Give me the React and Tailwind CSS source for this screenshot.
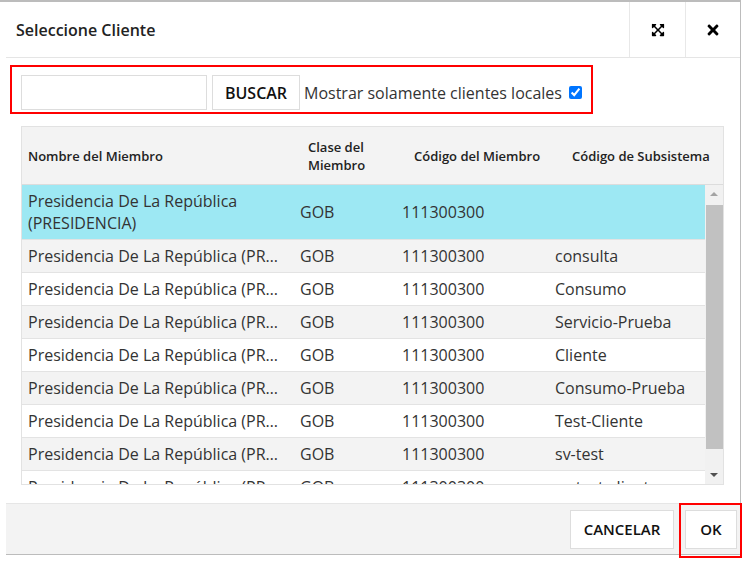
import { FaExpandArrowsAlt, FaTimes } from 'react-icons/fa';

const subs = ['consulta', 'Consumo', 'Servicio-Prueba', 'Cliente', 'Consumo-Prueba', 'Test-Cliente', 'sv-test', 'sv-test-client'];

const cols = 'grid grid-cols-[272px_102px_153px_1fr]';

export default function App() {
  return (
    <div className="w-[750px] h-[564px] bg-white font-['Open_Sans',sans-serif] text-[#333]">
      <div className="relative w-[741px] h-[555px] border-t-2 border-r border-[#bcbcbc] pl-[6px] flex flex-col">
        {/* Header */}
        <header className="h-[56px] shrink-0 border-b border-[#e5e5e5] flex items-center justify-between">
          <h1 className="pl-[10px] text-[16px] font-semibold text-[#222]">Seleccione Cliente</h1>
          <div className="flex h-full">
            <button className="w-[56px] h-full border-l border-[#e8e8e8] flex items-center justify-center text-black">
              <FaExpandArrowsAlt className="w-[14px] h-[14px]" />
            </button>
            <button className="w-[55px] h-full border-l border-[#e8e8e8] flex items-center justify-center text-black">
              <FaTimes className="w-[16px] h-[16px]" />
            </button>
          </div>
        </header>

        {/* Body */}
        <main className="flex-1 flex flex-col items-start">
          <div className="ml-[4px] mt-[7px] border-2 border-[#ff0000] flex items-center pl-[9px] pr-[9px] pt-[8px] pb-[2px]">
            <input className="w-[186px] h-[35px] border border-[#dddddd] bg-white" />
            <button className="ml-[5px] w-[88px] h-[35px] border border-[#dddddd] bg-white text-[16px] font-semibold text-[#111]">
              BUSCAR
            </button>
            <span className="ml-[4px] text-[16px] text-[#333]">Mostrar solamente clientes locales</span>
            <input type="checkbox" defaultChecked className="ml-[7px] w-[13px] h-[13px]" />
          </div>

          <div className="ml-[15px] mt-[12px] w-[703px] border border-[#e2e2e2]">
            <div className={`${cols} h-[58px] bg-[#f3f3f3] border-b border-[#dcdcdc] text-[13px] font-semibold text-[#222] leading-[18px] items-center`}>
              <div className="pl-[6px]">Nombre del Miembro</div>
              <div className="pl-[14px]">Clase del<br />Miembro</div>
              <div className="pl-[18px]">Código del Miembro</div>
              <div className="pl-[23px]">Código de Subsistema</div>
            </div>
            <div className="flex h-[299px]">
              <div className="flex-1 overflow-hidden text-[16px] text-[#333]">
                <div className={`${cols} h-[55px] bg-[#9de8f3] border-b border-[#e3e3e3] items-center leading-[22px]`}>
                  <div className="pl-[6px]">Presidencia De La República<br />(PRESIDENCIA)</div>
                  <div className="pl-[6px]">GOB</div>
                  <div className="pl-[6px]">111300300</div>
                  <div className="pl-[6px]"></div>
                </div>
                {subs.map((s, i) => (
                  <div
                    key={s}
                    className={`${cols} h-[33px] shrink-0 border-b border-[#e3e3e3] items-center ${i % 2 === 0 ? 'bg-[#f3f3f3]' : 'bg-white'}`}
                  >
                    <div className="pl-[6px] pr-[12px] truncate">Presidencia De La República (PRESIDENCIA)</div>
                    <div className="pl-[6px]">GOB</div>
                    <div className="pl-[6px]">111300300</div>
                    <div className="pl-[6px]">{s}</div>
                  </div>
                ))}
              </div>
              {/* Scrollbar */}
              <div className="w-[18px] bg-[#f1f1f1] flex flex-col items-center">
                <div className="h-[18px] flex items-center justify-center">
                  <div className="w-0 h-0 border-l-[4px] border-r-[4px] border-b-[4px] border-l-transparent border-r-transparent border-b-[#a3a3a3]" />
                </div>
                <div className="mt-[2px] w-[17px] h-[244px] bg-[#c1c1c1]" />
                <div className="flex-1" />
                <div className="h-[18px] flex items-center justify-center">
                  <div className="w-0 h-0 border-l-[4px] border-r-[4px] border-t-[4px] border-l-transparent border-r-transparent border-t-[#505050]" />
                </div>
              </div>
            </div>
          </div>
        </main>

        {/* Footer */}
        <footer className="h-[52px] shrink-0 bg-[#f3f3f3] border-t border-b border-t-[#e6e6e6] border-b-[#bcbcbc] flex items-center justify-end pr-[3px]">
          <button className="w-[104px] h-[39px] border border-[#dddddd] bg-white text-[15px] font-semibold text-[#111]">
            CANCELAR
          </button>
          <div className="relative ml-[11px]">
            <button className="w-[52px] h-[39px] border border-[#dddddd] bg-white text-[15px] font-semibold text-[#111]">
              OK
            </button>
            <span className="absolute -left-[6px] -right-[5px] -top-[7px] -bottom-[9px] border-2 border-[#ff0000] pointer-events-none" />
          </div>
        </footer>
      </div>
    </div>
  );
}
